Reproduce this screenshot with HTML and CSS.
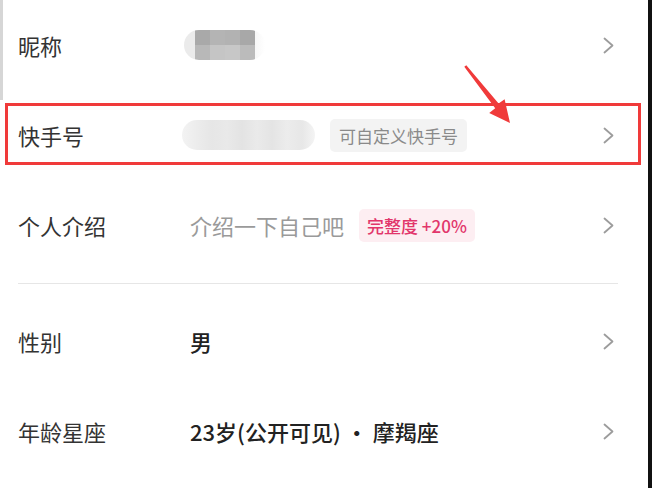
FILE: index.html
```html
<!DOCTYPE html>
<html lang="zh-CN">
<head>
  <meta charset="UTF-8" />
  <meta name="viewport" content="width=device-width, initial-scale=1.0" />
  <title>编辑资料</title>
  <link rel="stylesheet" href="styles.css">
</head>
<body>
  <div class="screen">
    <div class="scroll-edge"></div>

    <div class="row">
      <div class="label">昵称</div>
      <div class="value"><span class="blur blur-name"></span></div>
      <svg class="chev" viewBox="0 0 11 17"><path d="M1.5 1.5 L9.5 8.5 L1.5 15.5" /></svg>
    </div>

    <div class="row">
      <div class="label">快手号</div>
      <div class="value">
        <span class="blur blur-id"></span>
        <span class="tag">可自定义快手号</span>
      </div>
      <svg class="chev" viewBox="0 0 11 17"><path d="M1.5 1.5 L9.5 8.5 L1.5 15.5" /></svg>
    </div>

    <div class="row">
      <div class="label">个人介绍</div>
      <div class="value">
        <span class="hint">介绍一下自己吧</span>
        <span class="tag tag-pink">完整度 +20%</span>
      </div>
      <svg class="chev" viewBox="0 0 11 17"><path d="M1.5 1.5 L9.5 8.5 L1.5 15.5" /></svg>
    </div>

    <div class="divider"></div>

    <div class="row">
      <div class="label">性别</div>
      <div class="value strong">男</div>
      <svg class="chev" viewBox="0 0 11 17"><path d="M1.5 1.5 L9.5 8.5 L1.5 15.5" /></svg>
    </div>

    <div class="row">
      <div class="label">年龄星座</div>
      <div class="value strong">23岁(公开可见) · 摩羯座</div>
      <svg class="chev" viewBox="0 0 11 17"><path d="M1.5 1.5 L9.5 8.5 L1.5 15.5" /></svg>
    </div>

    <!-- annotation overlay -->
    <div class="mark-box"></div>
    <svg class="mark-arrow" viewBox="0 0 652 488">
      <polygon points="464.3,66.8 466.3,65.2 498.6,103.6 504.6,99.2 510,123 489.2,112.9 495.2,108.3" />
    </svg>
  </div>
</body>
</html>
```

FILE: styles.css
```css
body {
  margin: 0;
  background: #fff;
  font-family: "Noto Sans CJK SC", "Noto Sans", sans-serif;
}
.screen {
  position: relative;
  width: 648px;
  height: 488px;
  border-right: 4px solid #111;
  background: #fff;
  overflow: hidden;
}
.scroll-edge {
  position: absolute;
  left: 0;
  top: 0;
  width: 3px;
  height: 100px;
  background: #d6d6d6;
}
.row {
  display: flex;
  align-items: center;
  height: 90px;
  padding: 0 34px 0 18px;
}
.label {
  width: 172px;
  flex-shrink: 0;
  font-size: 22px;
  color: #333;
}
.value {
  flex: 1;
  display: flex;
  align-items: center;
  gap: 15px;
  font-size: 22px;
}
.strong {
  color: #222;
  font-weight: 500;
}
.hint {
  color: #9a9a9a;
}
.tag {
  padding: 0 9px;
  line-height: 33px;
  border-radius: 5px;
  font-size: 17px;
  background: #f3f3f3;
  color: #8a8a8a;
}
.tag-pink {
  padding: 0 8px;
  background: #fdeef2;
  color: #e2366b;
  font-weight: 500;
}
.blur {
  display: block;
  border-radius: 16px;
}
.blur-name {
  width: 81px;
  height: 30px;
  margin-left: -6px;
  background:
    linear-gradient(90deg, transparent 11px, #a9a9a9 11px, #a9a9a9 26px, #b4b4b4 26px, #b4b4b4 41px, #b2b2b2 41px, #b2b2b2 56px, #a8a8a8 56px, #a8a8a8 71px, transparent 71px) top / 100% 15px no-repeat,
    linear-gradient(90deg, transparent 11px, #b8b8b8 11px, #b8b8b8 26px, #c5c5c5 26px, #c5c5c5 41px, #c7c7c7 41px, #c7c7c7 56px, #bbbbbb 56px, #bbbbbb 71px, transparent 71px) bottom / 100% 15px no-repeat,
    linear-gradient(90deg, #ebebeb 0, #ebebeb 20px, #f6f6f6 70px, #fff 81px);
}
.blur-id {
  width: 133px;
  height: 30px;
  margin-left: -8px;
  background:
    linear-gradient(90deg, #f3f3f3 0, #ececec 15px, #e6e6e6 30px, #e9e9e9 45px, #e3e3e3 60px, #eaeaea 75px, #e4e4e4 90px, #ececec 105px, #e7e7e7 120px, #f4f4f4 133px);
}
.chev {
  width: 11px;
  height: 17px;
  flex-shrink: 0;
}
.chev path {
  fill: none;
  stroke: #9c9c9c;
  stroke-width: 1.8;
  stroke-linecap: round;
  stroke-linejoin: round;
}
.divider {
  height: 1px;
  margin: 13px 30px 12px 18px;
  background: #e6e6e6;
}
.mark-box {
  position: absolute;
  left: 5px;
  top: 103px;
  width: 630px;
  height: 56px;
  border: 3px solid #f03a3a;
}
.mark-arrow {
  position: absolute;
  left: 0;
  top: 0;
  width: 652px;
  height: 488px;
  pointer-events: none;
}
.mark-arrow polygon {
  fill: #f03a3a;
}
```
